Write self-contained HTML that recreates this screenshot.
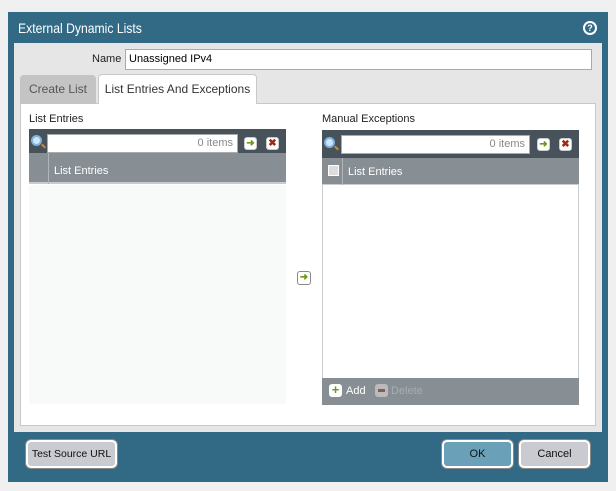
<!DOCTYPE html>
<html><head><style>
*{box-sizing:border-box}
body{margin:0;width:616px;height:491px;background:#f0f0f0;font-family:"Liberation Sans",sans-serif;font-size:11px;color:#222;position:relative;overflow:hidden}
.a{position:absolute;white-space:nowrap}
.btn{position:absolute;border:2px solid #fff;border-radius:5px;background:#c9cbd0;font-size:11px;text-align:center;line-height:24px;color:#111;box-shadow:0 0 0 1px #888;white-space:nowrap}
.tb{background:#47525a}
.hd{background:#878e94;color:#fff;font-size:11px}
.srch{background:#fff;border:1px solid #aaa;text-align:right;color:#888;padding-right:4px;line-height:17px;font-size:11px}
.ib{width:13px;height:13px;background:#fff;border-radius:3px;border:1px solid #ccc}
.mag{width:11px;height:11px;border-radius:50%;border:2px solid #7fb3e0;background:#cfe6fa}
.mag:after{content:"";position:absolute;left:8px;top:8px;width:5px;height:2px;background:#c88a3a;transform:rotate(45deg)}
</style></head><body>
<div class="a" style="left:8px;top:12px;width:600px;height:470px;background:#326a86"></div>
<div class="a" style="left:18px;top:20px;color:#fff;font-size:14px;transform:scaleX(0.87);transform-origin:0 0">External Dynamic Lists</div>
<div class="a" style="left:583px;top:21px;width:14px;height:14px;border-radius:50%;background:#fff;"><div class="a" style="left:2px;top:2px;width:10px;height:10px;border-radius:50%;background:#326a86;color:#fff;font-size:9px;font-weight:bold;text-align:center;line-height:10px">?</div></div>
<div class="a" style="left:14px;top:43px;width:588px;height:389px;background:#e6e6e6"></div>
<div class="a" style="left:20px;top:103px;width:576px;height:323px;background:#fff;border:1px solid #c8c8c8"></div>
<div class="a" style="left:92px;top:53px">Name</div>
<div class="a" style="left:125px;top:49px;width:467px;height:21px;background:#fff;border:1px solid #aaa;padding-left:3px;line-height:19px;color:#000">Unassigned IPv4</div>
<div class="a" style="left:20px;top:75px;width:76px;height:29px;background:#c4c4c4;border-radius:4px 4px 0 0;color:#555;font-size:12px;line-height:28px;text-align:center">Create List</div>
<div class="a" style="left:98px;top:74px;width:159px;height:30px;background:#fff;border:1px solid #c8c8c8;border-bottom:none;border-radius:4px 4px 0 0;font-size:12px;line-height:28px;text-align:center;color:#333">List Entries And Exceptions</div>
<div class="a" style="left:29px;top:113px">List Entries</div>
<div class="a tb" style="left:29px;top:129px;width:257px;height:24px"></div>
<div class="a mag" style="left:31px;top:135px"></div>
<div class="a srch" style="left:47px;top:134px;width:191px;height:19px">0 items</div>
<div class="a ib" style="left:244px;top:137px;color:#6a9a1a;font-size:10px;line-height:11px;text-align:center;font-weight:bold">➜</div>
<div class="a ib" style="left:266px;top:137px;color:#a02a10;font-size:10px;line-height:11px;text-align:center;font-weight:bold">✖</div>
<div class="a hd" style="left:29px;top:153px;width:257px;height:31px;border-bottom:2px solid #c8ccd0"></div>
<div class="a" style="left:48px;top:153px;width:1px;height:31px;background:#b0b5ba"></div>
<div class="a" style="left:54px;top:165px;color:#fff">List Entries</div>
<div class="a" style="left:29px;top:185px;width:257px;height:219px;background:#f8f9f9"></div>
<div class="a ib" style="left:297px;top:271px;width:14px;height:14px;border-color:#888;color:#6a9a1a;font-size:10px;line-height:12px;text-align:center;font-weight:bold">➜</div>
<div class="a" style="left:322px;top:113px">Manual Exceptions</div>
<div class="a tb" style="left:322px;top:130px;width:257px;height:28px"></div>
<div class="a mag" style="left:324px;top:137px"></div>
<div class="a srch" style="left:341px;top:135px;width:189px;height:19px">0 items</div>
<div class="a ib" style="left:537px;top:138px;color:#6a9a1a;font-size:10px;line-height:11px;text-align:center;font-weight:bold">➜</div>
<div class="a ib" style="left:559px;top:138px;color:#a02a10;font-size:10px;line-height:11px;text-align:center;font-weight:bold">✖</div>
<div class="a hd" style="left:322px;top:158px;width:257px;height:27px;border-bottom:1px solid #c8ccd0"></div>
<div class="a" style="left:342px;top:158px;width:1px;height:27px;background:#b0b5ba"></div>
<div class="a" style="left:328px;top:165px;width:11px;height:11px;background:#ddd;border:1px solid #fff"></div>
<div class="a" style="left:348px;top:166px;color:#fff">List Entries</div>
<div class="a" style="left:322px;top:185px;width:257px;height:193px;background:#fff;border-left:1px solid #c8ccd0;border-right:1px solid #c8ccd0"></div>
<div class="a" style="left:322px;top:378px;width:257px;height:27px;background:#878e94"></div>
<div class="a" style="left:329px;top:384px;width:13px;height:13px;background:#fff;border-radius:3px;color:#6a9a1a;font-weight:bold;font-size:13px;line-height:12px;text-align:center">+</div>
<div class="a" style="left:346px;top:385px;color:#fff">Add</div>
<div class="a" style="left:375px;top:384px;width:13px;height:13px;background:#bbb;border-radius:3px;"><div class="a" style="left:3px;top:5px;width:7px;height:3px;background:#8a5a4a"></div></div>
<div class="a" style="left:391px;top:385px;color:#a8adb2">Delete</div>
<div class="btn" style="left:26px;top:440px;width:91px;height:28px;font-size:10.5px">Test Source URL</div>
<div class="btn" style="left:442px;top:440px;width:71px;height:28px;background:#6aa0b8">OK</div>
<div class="btn" style="left:519px;top:440px;width:71px;height:28px">Cancel</div>
</body></html>
